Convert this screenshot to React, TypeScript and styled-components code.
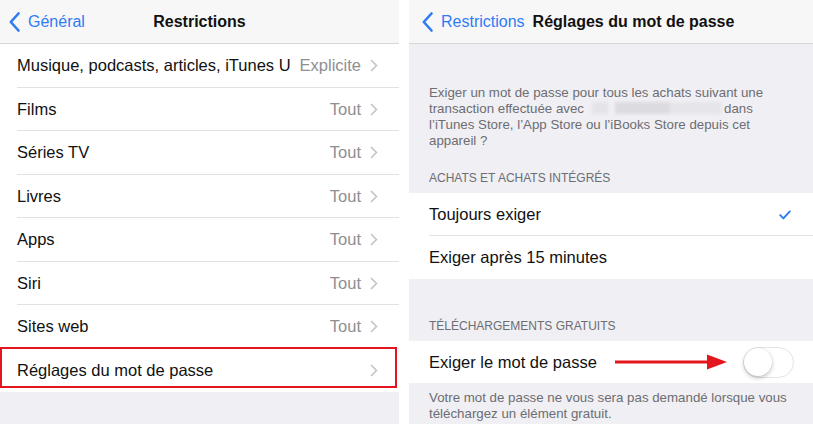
import React from 'react';
import styled, { createGlobalStyle } from 'styled-components';

const GlobalStyle = createGlobalStyle`
  html, body {
    margin: 0;
    padding: 0;
    background: #ffffff;
  }
  body {
    font-family: "Liberation Sans", Arial, sans-serif;
    -webkit-font-smoothing: antialiased;
  }
`;

const Page = styled.div`
  display: flex;
  gap: 10px;
  width: 813px;
  height: 424px;
  overflow: hidden;
  background: #ffffff;
`;

const Screen = styled.div<{ $width: number }>`
  width: ${(p) => p.$width}px;
  flex-shrink: 0;
  height: 424px;
  background: #efeff4;
  display: flex;
  flex-direction: column;
  overflow: hidden;
`;

const NavBar = styled.div`
  height: 43px;
  flex-shrink: 0;
  background: #f7f7f7;
  border-bottom: 1px solid #d6d6da;
  display: flex;
  align-items: center;
  position: relative;
  font-size: 16px;
`;

const BackButton = styled.div<{ $left: number }>`
  display: flex;
  align-items: center;
  gap: 8px;
  padding-left: ${(p) => p.$left}px;
  color: #2f7bf5;
`;

const NavTitle = styled.div<{ $centered?: boolean }>`
  font-weight: bold;
  color: #111;
  ${(p) =>
    p.$centered
      ? `position: absolute; left: 0; right: 0; text-align: center; pointer-events: none;`
      : `margin-left: 8px;`}
`;

const List = styled.div`
  background: #ffffff;
  display: flex;
  flex-direction: column;
`;

const Row = styled.div<{ $inset: number; $height: number; $last?: boolean; $highlight?: boolean }>`
  height: ${(p) => p.$height}px;
  display: flex;
  align-items: center;
  padding-left: ${(p) => p.$inset}px;
  position: relative;
  font-size: 16.5px;
  color: #111;
  &::after {
    content: '';
    display: ${(p) => (p.$last ? 'none' : 'block')};
    position: absolute;
    left: ${(p) => p.$inset}px;
    right: 0;
    bottom: 0;
    height: 1px;
    background: #e2e2e6;
  }
  ${(p) =>
    p.$highlight
      ? `&::before {
          content: '';
          position: absolute;
          left: 0; right: 2px; top: -2px; height: 41px;
          box-sizing: border-box;
          border: 2px solid #e3161d;
        }`
      : ''}
`;

const Label = styled.span`
  flex: 1;
  white-space: nowrap;
`;

const Value = styled.span`
  color: #8e8e93;
  margin-right: 9px;
`;

const Chevron = styled.svg`
  width: 8px;
  height: 13px;
  margin-right: 21px;
  flex-shrink: 0;
`;

const Description = styled.p<{ $top: number }>`
  margin: ${(p) => p.$top}px 0 0;
  padding: 0 20px;
  font-size: 13.3px;
  line-height: 16px;
  color: #6d6d72;
`;

const Redacted = styled.span`
  display: inline-block;
  width: 130px;
  height: 12px;
  vertical-align: -1px;
  margin: 0 2px 0 8px;
  background: linear-gradient(90deg, #e4e4e8 0 12%, #efeff4 12% 18%, #dcdce0 18% 60%, #e6e6ea 60% 100%);
  filter: blur(1.5px);
`;

const SectionHeader = styled.div<{ $top: number }>`
  margin-top: ${(p) => p.$top}px;
  padding: 0 20px 7px;
  font-size: 12px;
  line-height: 16px;
  color: #6d6d72;
  text-transform: uppercase;
`;

const Check = styled.svg`
  width: 12px;
  height: 10px;
  margin-right: 22px;
`;

const Arrow = styled.svg`
  width: 112px;
  height: 16px;
  margin-left: 2px;
  margin-right: 16px;
`;

const Toggle = styled.div`
  width: 51px;
  height: 31px;
  box-sizing: border-box;
  border-radius: 16px;
  border: 1.5px solid #e4e4e6;
  background: #fff;
  margin-right: 19px;
  position: relative;
  flex-shrink: 0;
`;

const Knob = styled.div`
  position: absolute;
  left: 0;
  top: 0;
  width: 28px;
  height: 28px;
  border-radius: 50%;
  background: #fff;
  box-shadow: 0 2px 4px rgba(0, 0, 0, 0.22), 0 0 0 0.5px rgba(0, 0, 0, 0.08);
`;

const BackChevron = () => (
  <svg width="11" height="20" viewBox="0 0 11 20">
    <path d="M9.5 1.5 L1.8 10 L9.5 18.5" fill="none" stroke="#2f7bf5" strokeWidth="2.6" strokeLinecap="round" strokeLinejoin="round" />
  </svg>
);

const Disclosure = () => (
  <Chevron viewBox="0 0 8 13">
    <path d="M1 1 L6.5 6.5 L1 12" fill="none" stroke="#c4c4c9" strokeWidth="1.6" />
  </Chevron>
);

const restrictions: [string, string][] = [
  ['Musique, podcasts, articles, iTunes U', 'Explicite'],
  ['Films', 'Tout'],
  ['Séries TV', 'Tout'],
  ['Livres', 'Tout'],
  ['Apps', 'Tout'],
  ['Siri', 'Tout'],
  ['Sites web', 'Tout'],
];

const App: React.FC = () => {
  return (
    <>
      <GlobalStyle />
      <Page>
        <Screen $width={399}>
          <NavBar>
            <BackButton $left={9}>
              <BackChevron />
              <span>Général</span>
            </BackButton>
            <NavTitle $centered>Restrictions</NavTitle>
          </NavBar>
          <List>
            {restrictions.map(([label, value]) => (
              <Row key={label} $inset={17} $height={43.5}>
                <Label>{label}</Label>
                <Value>{value}</Value>
                <Disclosure />
              </Row>
            ))}
            <Row $inset={17} $height={43.5} $last $highlight>
              <Label>Réglages du mot de passe</Label>
              <Disclosure />
            </Row>
          </List>
        </Screen>

        <Screen $width={404}>
          <NavBar>
            <BackButton $left={13}>
              <BackChevron />
              <span>Restrictions</span>
            </BackButton>
            <NavTitle>Réglages du mot de passe</NavTitle>
          </NavBar>
          <Description $top={41}>
            Exiger un mot de passe pour tous les achats suivant une
            <br />
            transaction effectuée avec<Redacted />dans
            <br />
            l’iTunes Store, l’App Store ou l’iBooks Store depuis cet
            <br />
            appareil ?
          </Description>
          <SectionHeader $top={21}>Achats et achats intégrés</SectionHeader>
          <List>
            <Row $inset={20} $height={43}>
              <Label>Toujours exiger</Label>
              <Check viewBox="0 0 12 10">
                <path d="M1.2 5.2 L4.4 8.4 L10.8 1.4" fill="none" stroke="#2f7bf5" strokeWidth="1.9" strokeLinecap="round" strokeLinejoin="round" />
              </Check>
            </Row>
            <Row $inset={20} $height={43} $last>
              <Label>Exiger après 15 minutes</Label>
            </Row>
          </List>
          <SectionHeader $top={39}>Téléchargements gratuits</SectionHeader>
          <List>
            <Row $inset={20} $height={42} $last>
              <Label>Exiger le mot de passe</Label>
              <Arrow viewBox="0 0 112 16">
                <rect x="0" y="6.5" width="94" height="3" fill="#e3161d" />
                <polygon points="92,0.5 112,8 92,15.5" fill="#e3161d" />
              </Arrow>
              <Toggle>
                <Knob />
              </Toggle>
            </Row>
          </List>
          <Description $top={7}>
            Votre mot de passe ne vous sera pas demandé lorsque vous
            <br />
            téléchargez un élément gratuit.
          </Description>
        </Screen>
      </Page>
    </>
  );
};

export default App;
